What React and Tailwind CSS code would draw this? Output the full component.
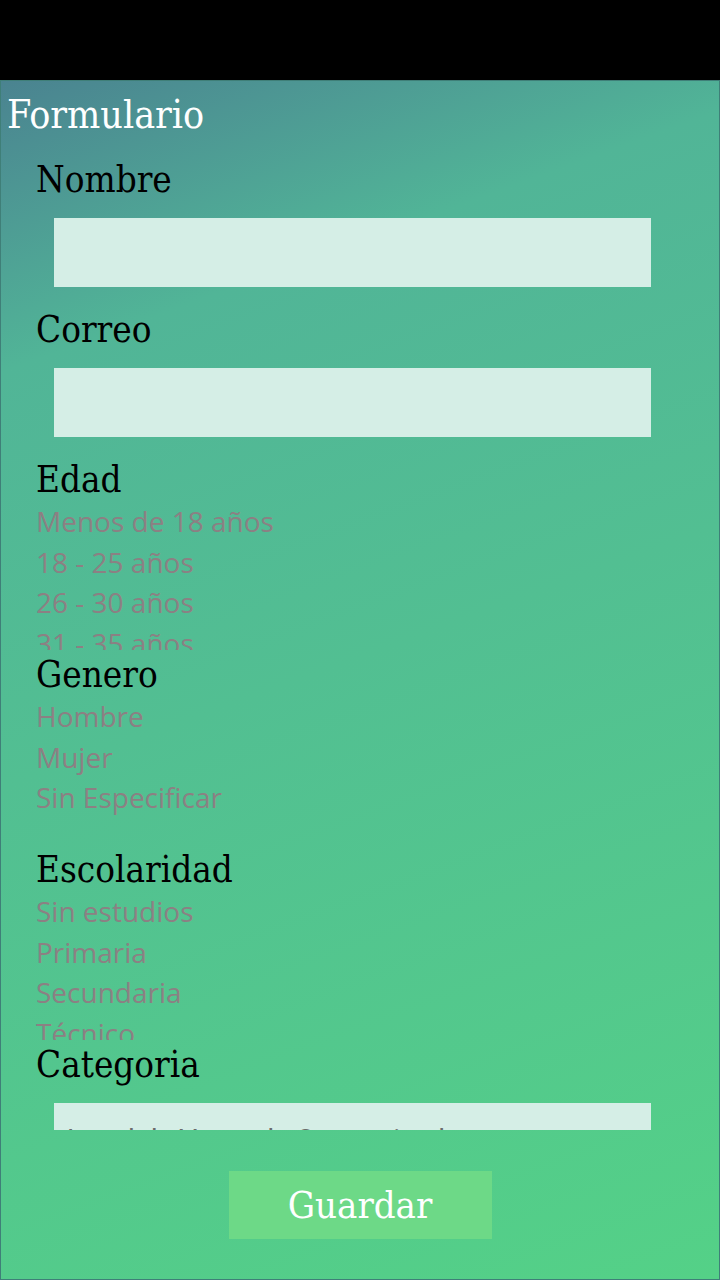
const sections = [
  {
    label: "Edad",
    items: ["Menos de 18 años", "18 - 25 años", "26 - 30 años", "31 - 35 años", "36 - 40 años"],
  },
  {
    label: "Genero",
    items: ["Hombre", "Mujer", "Sin Especificar"],
  },
  {
    label: "Escolaridad",
    items: ["Sin estudios", "Primaria", "Secundaria", "Técnico", "Licenciatura"],
  },
];

function Label({ children }) {
  return (
    <div className="h-[50px] pl-[35px] text-[36.5px] leading-[50px] text-black font-[DejaVu_Serif] font-stretch-condensed whitespace-nowrap">
      {children}
    </div>
  );
}

export default function App() {
  return (
    <div className="w-[720px] h-[1280px] flex flex-col bg-black">
      <div className="h-[80px] shrink-0 bg-black" />

      <div className="flex-1 flex flex-col border border-[#3f7f78] bg-linear-160 from-[#4a8390] via-[#51b597] via-20% to-[#54d187]">
        {/* Title */}
        <div className="h-[74px] pl-[6px] pt-[6px] text-[39px] leading-[56px] text-white font-[DejaVu_Serif] font-stretch-condensed">
          Formulario
        </div>

        {/* Nombre */}
        <Label>Nombre</Label>
        <div className="ml-[53px] mt-[13px] mb-[18px] w-[597px] h-[69px] bg-[#d5eee6]" />

        {/* Correo */}
        <Label>Correo</Label>
        <div className="ml-[53px] mt-[13px] mb-[18px] w-[597px] h-[69px] bg-[#d5eee6]" />

        {/* Listas */}
        {sections.map((section) => (
          <div key={section.label}>
            <Label>{section.label}</Label>
            <div className="h-[145px] overflow-hidden pl-[35px] font-['Open_Sans'] text-[28px] leading-[40.5px] text-[#8c8083]">
              <div className="-mt-[4px]">
                {section.items.map((item) => (
                  <div key={item} className="whitespace-nowrap">{item}</div>
                ))}
              </div>
            </div>
          </div>
        ))}

        {/* Categoria */}
        <Label>Categoria</Label>
        <div className="ml-[53px] mt-[13px] w-[597px] h-[27px] overflow-hidden bg-[#d5eee6]">
          <div className="pt-[17px] pl-[13px] text-[28px] leading-[40px] text-[#6b6b6b] font-['Roboto'] whitespace-nowrap">
            Local de Venta de Comercio al por menor
          </div>
        </div>

        {/* Boton */}
        <div className="flex justify-center mt-[41px]">
          <button className="w-[263px] h-[68px] bg-[#6dd987] text-white text-[38px] font-[DejaVu_Serif] font-stretch-condensed">
            Guardar
          </button>
        </div>
      </div>
    </div>
  );
}
